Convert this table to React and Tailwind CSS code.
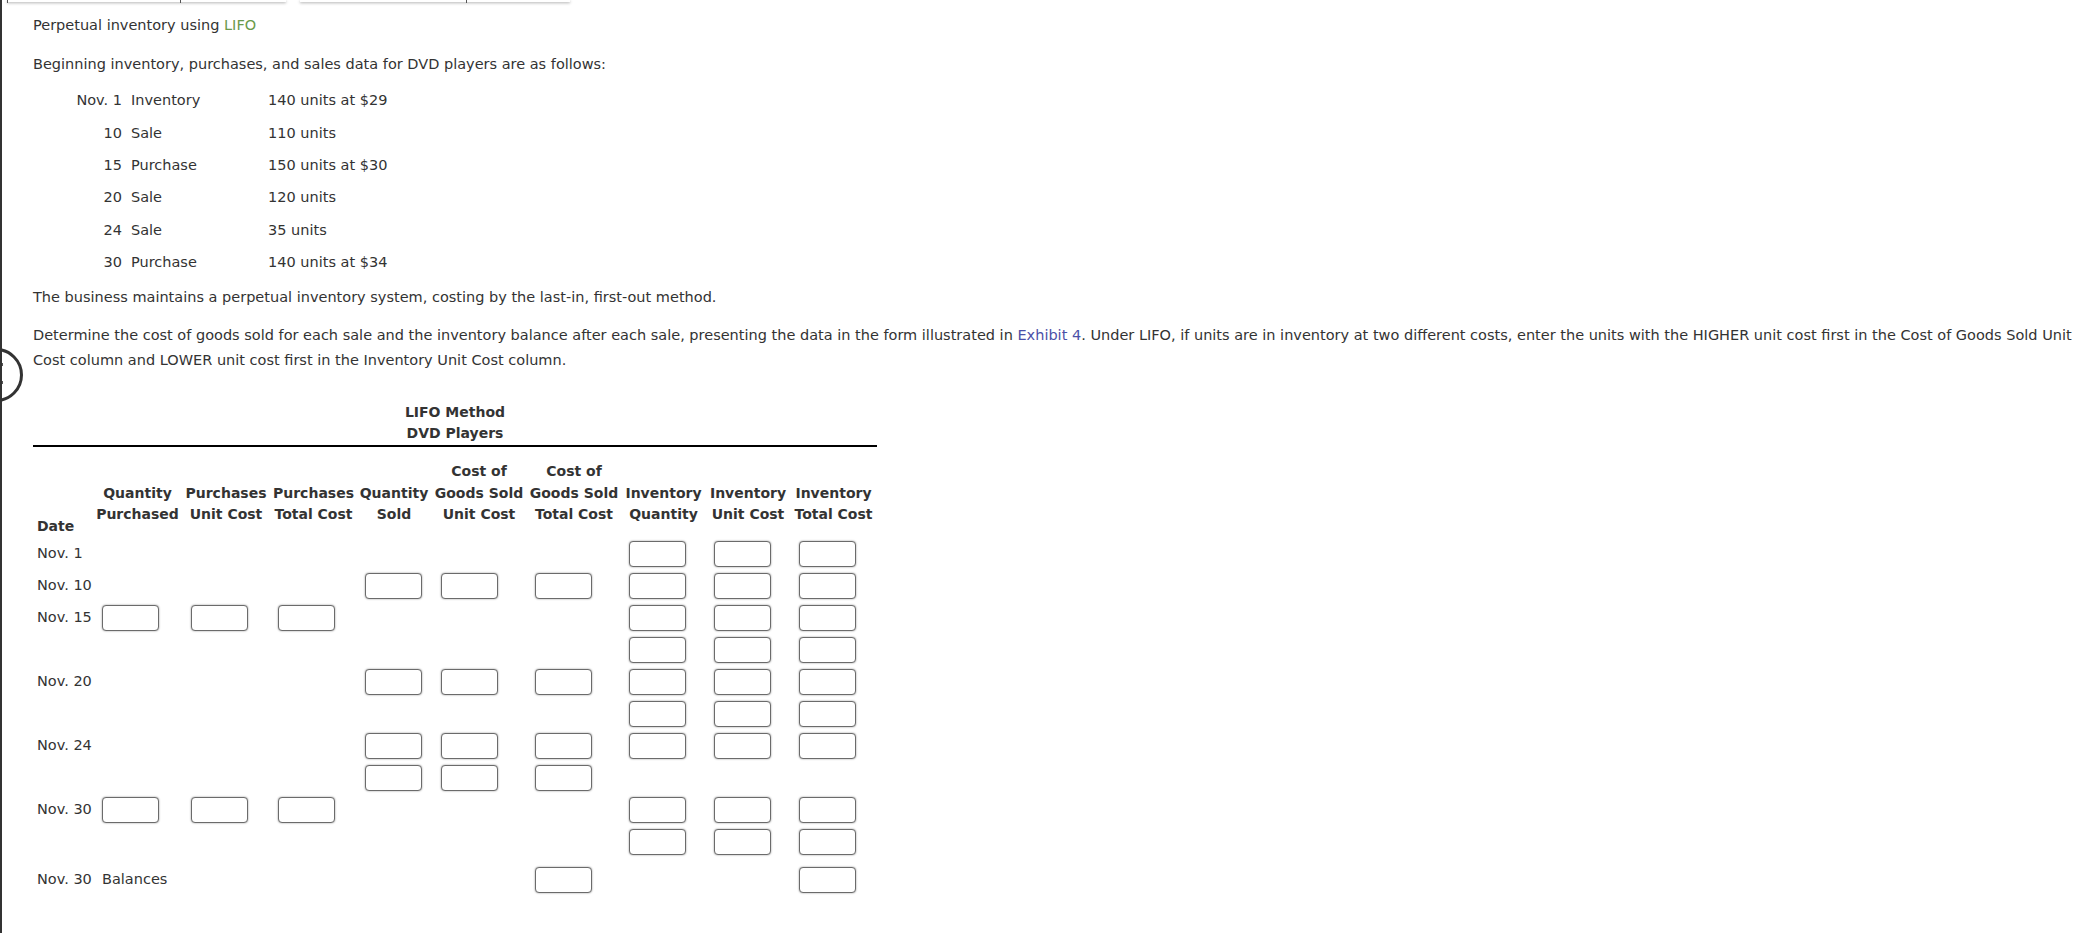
import React from "react";

const COLS = "grid grid-cols-[60px_89px_88px_87px_74px_96px_94px_85px_84px_87px]";
const PADS = ["pl-[4px]", "pl-[9px]", "pl-[9px]", "pl-[8px]", "pl-[8px]", "pl-[10px]", "pl-[8px]", "pl-[8px]", "pl-[8px]", "pl-[9px]"];

const HEADERS = [
  ["", "Quantity", "Purchased"],
  ["", "Purchases", "Unit Cost"],
  ["", "Purchases", "Total Cost"],
  ["", "Quantity", "Sold"],
  ["Cost of", "Goods Sold", "Unit Cost"],
  ["Cost of", "Goods Sold", "Total Cost"],
  ["", "Inventory", "Quantity"],
  ["", "Inventory", "Unit Cost"],
  ["", "Inventory", "Total Cost"],
];

const ROWS = [
  { d: "Nov. 1", i: [8, 9, 10] },
  { d: "Nov. 10", i: [5, 6, 7, 8, 9, 10] },
  { d: "Nov. 15", i: [2, 3, 4, 8, 9, 10] },
  { d: "", i: [8, 9, 10] },
  { d: "Nov. 20", i: [5, 6, 7, 8, 9, 10] },
  { d: "", i: [8, 9, 10] },
  { d: "Nov. 24", i: [5, 6, 7, 8, 9, 10] },
  { d: "", i: [5, 6, 7] },
  { d: "Nov. 30", i: [2, 3, 4, 8, 9, 10] },
  { d: "", i: [8, 9, 10] },
];

const DATA = [
  ["Nov. 1", "Inventory", "140 units at $29"],
  ["10", "Sale", "110 units"],
  ["15", "Purchase", "150 units at $30"],
  ["20", "Sale", "120 units"],
  ["24", "Sale", "35 units"],
  ["30", "Purchase", "140 units at $34"],
];

function Box() {
  return (
    <div className="w-[57px] h-[26px] rounded-[4px] border border-[#6b6b6b] bg-white shadow-[0_0_2px_rgba(0,0,0,0.45)]" />
  );
}

function BodyRow({ d, i, extra, balance }) {
  const cells = [];
  for (let c = 1; c <= 10; c++) {
    let content = null;
    if (c === 1) content = <span className="whitespace-nowrap">{d}</span>;
    else if (balance && c === 2) content = <span className="whitespace-nowrap">Balances</span>;
    else if (i.includes(c)) content = <Box />;
    cells.push(
      <div key={c} className={`${PADS[c - 1]} flex items-center h-full`}>
        {content}
      </div>
    );
  }
  return <div className={`${COLS} h-[32px] ${extra || ""}`}>{cells}</div>;
}

export default function App() {
  return (
    <div className="relative w-full h-[933px] overflow-hidden bg-white border-l-2 border-[#333] text-[#333] text-[14.5px] font-['DejaVu_Sans',sans-serif]">
      {/* cut-off cards at top */}
      <div className="flex h-[3px]">
        <div className="relative ml-[5px] w-[279px] h-[2px] bg-white shadow-[0_1px_3px_rgba(0,0,0,0.35)]">
          <div className="absolute left-[173px] top-0 w-px h-[3px] bg-[#555]" />
        </div>
        <div className="relative ml-[14px] w-[270px] h-[2px] bg-white shadow-[0_1px_3px_rgba(0,0,0,0.35)]">
          <div className="absolute left-[166px] top-0 w-px h-[3px] bg-[#555]" />
        </div>
      </div>
      <div className="absolute left-0 top-0 w-px h-[3px] bg-[#555] ml-[5px]" />

      {/* collapsed side handle */}
      <div className="absolute left-[-33px] top-[348px] w-[54px] h-[54px] rounded-full border-[3px] border-[#333] bg-white" />
      <div className="absolute left-[-2px] top-[363px] w-[3px] h-[3px] bg-[#555]" />
      <div className="absolute left-[-2px] top-[381px] w-[3px] h-[3px] bg-[#555]" />

      <div className="pl-[31px]">
        <p className="mt-[12px] leading-[20px]">
          Perpetual inventory using <span className="text-[#6a9a4a]">LIFO</span>
        </p>
        <p className="mt-[19px] leading-[20px]">
          Beginning inventory, purchases, and sales data for DVD players are as follows:
        </p>

        <div className="mt-[11px]">
          {DATA.map((r, k) => (
            <div key={k} className="grid grid-cols-[89px_146px_auto] h-[32.4px] items-center">
              <div className="text-right whitespace-nowrap">{r[0]}</div>
              <div className="pl-[9px] whitespace-nowrap">{r[1]}</div>
              <div className="whitespace-nowrap">{r[2]}</div>
            </div>
          ))}
        </div>

        <p className="mt-[8px] leading-[20px]">
          The business maintains a perpetual inventory system, costing by the last-in, first-out method.
        </p>

        <p className="mt-[16px] leading-[25px] whitespace-nowrap">
          Determine the cost of goods sold for each sale and the inventory balance after each sale, presenting the data in the form illustrated in{" "}
          <span className="text-[#4b50a8]">Exhibit 4</span>. Under LIFO, if units are in inventory at two different costs, enter the units with the HIGHER unit cost first in the Cost of Goods Sold Unit
          <br />
          Cost column and LOWER unit cost first in the Inventory Unit Cost column.
        </p>

        {/* table */}
        <div className="w-[844px] mt-[29px]">
          <div className="text-center font-bold text-[14px] leading-[21px] border-b-2 border-black pb-[1px]">
            <div>LIFO Method</div>
            <div>DVD Players</div>
          </div>

          <div className={`${COLS} items-end mt-[14px] font-bold text-[14px]`}>
            <div className="pl-[4px] leading-[21px]">Date</div>
            {HEADERS.map((h, k) => (
              <div key={k} className="text-center leading-[21.5px] pb-[11px] whitespace-nowrap">
                {h[0] ? <div>{h[0]}</div> : null}
                <div>{h[1]}</div>
                <div>{h[2]}</div>
              </div>
            ))}
          </div>

          <div className="mt-[1px]">
            {ROWS.map((r, k) => (
              <BodyRow key={k} d={r.d} i={r.i} />
            ))}
            <BodyRow d="Nov. 30" i={[7, 10]} balance extra="mt-[6px]" />
          </div>
        </div>
      </div>
    </div>
  );
}
